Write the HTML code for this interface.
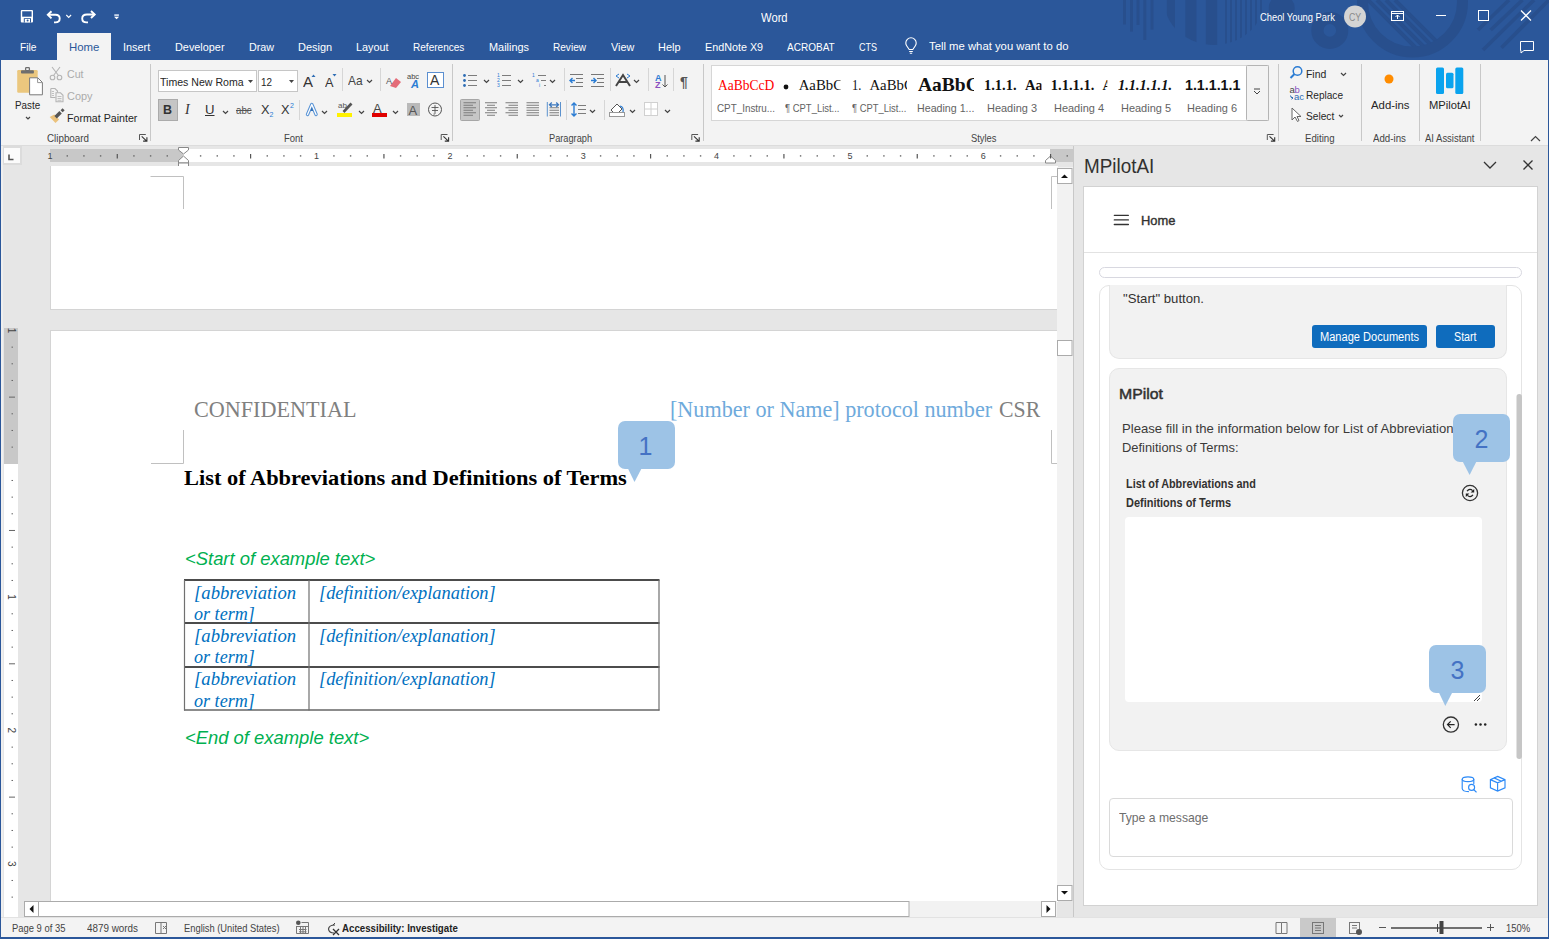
<!DOCTYPE html>
<html><head><meta charset="utf-8">
<style>
*{margin:0;padding:0;box-sizing:border-box}
:root{--s:"Liberation Sans",sans-serif;--f:"Liberation Serif",serif}
html,body{width:1549px;height:939px;overflow:hidden;background:#2B579A;font-family:"Liberation Sans",sans-serif;position:relative}
.a{position:absolute}
.t{position:absolute;white-space:nowrap;line-height:normal;transform-origin:0 0}
.sep{position:absolute;width:1px;background:#C8C8C8}
svg{position:absolute;overflow:visible}
</style></head><body>
<!-- ============ TITLE BAR ============ -->
<svg style="left:0;top:0" width="1549" height="60">
  <defs><clipPath id="semi"><ellipse cx="1214" cy="0" rx="50" ry="45"/></clipPath>
  <clipPath id="ring"><circle cx="1412.5" cy="2" r="45"/></clipPath></defs>
  <g fill="#284F8D">
    <rect x="1123" y="0" width="3" height="24.5"/>
    <rect x="1130" y="0" width="3" height="31.6"/>
    <rect x="1136.5" y="0" width="3" height="25"/>
    <rect x="1143.3" y="0" width="3" height="40"/>
    <rect x="1150.5" y="0" width="3" height="29.6"/>
    <g clip-path="url(#semi)">
      <rect x="1166.8" y="0" width="8.2" height="60"/>
      <rect x="1185.3" y="0" width="11.2" height="60"/>
      <rect x="1205.8" y="0" width="11.4" height="60"/>
      <rect x="1225" y="0" width="2" height="60"/>
      <rect x="1230" y="0" width="2" height="60"/>
      <rect x="1235" y="0" width="2" height="60"/>
      <rect x="1240" y="0" width="2" height="60"/>
      <rect x="1245" y="0" width="2" height="60"/>
      <rect x="1250" y="0" width="2" height="60"/>
      <rect x="1255" y="0" width="2" height="60"/>
      <rect x="1260" y="0" width="2" height="60"/>
    </g>
    <circle cx="1281.7" cy="8" r="13"/>
  </g>
  <circle cx="1329.8" cy="30.4" r="12.4" fill="none" stroke="#284F8D" stroke-width="12.2"/>
  <circle cx="1412.5" cy="2" r="50" fill="none" stroke="#284F8D" stroke-width="11"/>
  <g stroke="#284F8D" stroke-width="4" clip-path="url(#ring)">
    <line x1="1368" y1="0" x2="1428" y2="60"/>
    <line x1="1377" y1="0" x2="1437" y2="60"/>
    <line x1="1386" y1="0" x2="1446" y2="60"/>
    <line x1="1395" y1="0" x2="1455" y2="60"/>
  </g>
  <g stroke="#284F8D" stroke-width="3.6">
    <line x1="1478" y1="30" x2="1509" y2="0"/>
    <line x1="1490.7" y1="30" x2="1522.5" y2="0"/>
    <line x1="1483" y1="50" x2="1534" y2="0"/>
    <line x1="1501.5" y1="47.7" x2="1549" y2="0"/>
  </g>
</svg>
<!-- quick access -->
<svg style="left:0;top:0" width="130" height="33">
  <rect x="20.8" y="10" width="12.2" height="12.5" rx="1" fill="#fff"/>
  <rect x="22.2" y="11.3" width="9.4" height="5.4" fill="#2B579A"/>
  <rect x="23.8" y="18.2" width="7.2" height="4.3" fill="#2B579A"/>
  <rect x="24.8" y="19" width="5.2" height="3.5" fill="#fff"/>
  <circle cx="27.6" cy="20.5" r="1" fill="#2B579A"/>
  <path d="M48 14.8 H55.5 Q59.7 14.8 59.7 18.6 Q59.7 22.4 55.5 22.4 H54" fill="none" stroke="#fff" stroke-width="1.9"/>
  <path d="M51.5 11.2 L47.8 14.8 L51.5 18.4" fill="none" stroke="#fff" stroke-width="1.9"/>
  <path d="M66.3 15 L68.7 17.5 L71.1 15" fill="none" stroke="#fff" stroke-width="1.1"/>
  <path d="M94.5 14.5 H87 Q82.2 14.5 82.2 18.5 Q82.2 22.4 86.5 22.4 H88" fill="none" stroke="#fff" stroke-width="1.9"/>
  <path d="M91 11 L94.7 14.5 L91 18" fill="none" stroke="#fff" stroke-width="1.9"/>
  <rect x="114.3" y="14.2" width="4.6" height="2.2" fill="#C8D4E8"/>
  <path d="M114.3 17 H118.9 L116.6 19.2Z" fill="#fff"/>
</svg>
<!-- window controls -->
<svg style="left:0;top:0" width="1549" height="60">
  <circle cx="1355" cy="16.5" r="11" fill="#D4D4D4"/>
  <g fill="none" stroke="#fff" stroke-width="1">
    <rect x="1391.5" y="11.5" width="12" height="9"/>
    <line x1="1391.5" y1="13.5" x2="1403.5" y2="13.5"/>
    <line x1="1436" y1="15.5" x2="1446" y2="15.5"/>
    <rect x="1478.5" y="10.5" width="10" height="10"/>
    <line x1="1521" y1="10.5" x2="1531" y2="20.5" stroke-width="1.3"/>
    <line x1="1531" y1="10.5" x2="1521" y2="20.5" stroke-width="1.3"/>
    <path d="M1520.5 41.5 H1533.5 V50.5 H1524 L1521 53 V50.5 H1520.5Z"/>
  </g>
  <path d="M1397.5 19 V15 M1395.5 17 L1397.5 15 L1399.5 17" stroke="#fff" stroke-width="1" fill="none"/>
  <path d="M909.2 49.5 L906.8 46 Q905.8 44.5 905.8 43 A5.2 5.2 0 0 1 916.2 43 Q916.2 44.5 915.2 46 L912.8 49.5Z M909.2 51.5 H912.8 M909.8 53.3 H912.2" fill="none" stroke="#fff" stroke-width="1.1"/>
</svg>
<!-- Home tab -->
<div class="a" style="left:57px;top:33px;width:54px;height:28px;background:#F3F3F3"></div>

<!-- ============ RIBBON ============ -->
<div class="a" style="left:1px;top:60px;width:1547px;height:86px;background:#F3F3F3;border-bottom:1px solid #DCDCDC"></div>
<div class="sep" style="left:150px;top:64px;height:77px"></div>
<div class="sep" style="left:452px;top:64px;height:77px"></div>
<div class="sep" style="left:703px;top:64px;height:77px"></div>
<div class="sep" style="left:1278px;top:64px;height:77px"></div>
<div class="sep" style="left:1361px;top:64px;height:77px"></div>
<div class="sep" style="left:1419px;top:64px;height:77px"></div>
<div class="sep" style="left:1480px;top:64px;height:77px"></div>
<!-- clipboard icons -->
<svg style="left:0;top:60px" width="150" height="86">
  <rect x="17.2" y="10" width="20.5" height="22.7" rx="1.2" fill="#EBC77E"/>
  <rect x="21" y="10.2" width="12.9" height="3.3" rx="0.8" fill="#6E6E6E"/>
  <rect x="25.6" y="7.6" width="3.8" height="3" rx="0.8" fill="none" stroke="#6E6E6E" stroke-width="1.3"/>
  <path d="M29.6 17.8 H37.8 L42.4 22.4 V34.8 H29.6Z" fill="#fff" stroke="#7A7A7A" stroke-width="1"/>
  <path d="M37.6 18 V22.6 H42.2" fill="none" stroke="#8A8A8A" stroke-width="0.9"/>
  <path d="M26 57 L28 59 L30 57" fill="none" stroke="#444" stroke-width="1.2"/>
  <!-- cut -->
  <g fill="none" stroke="#B4B4B4" stroke-width="1.1">
    <circle cx="52.5" cy="17.5" r="2.3"/><circle cx="59.5" cy="17.5" r="2.3"/>
    <path d="M53.5 15.5 L60 7 M58.5 15.5 L52 7"/>
    <path d="M50.8 28.5 H55 L57.5 31 V32.5 M50.8 28.5 V37.5 H55.5"/>
    <path d="M56 32.8 H60.5 L63 35.3 V41.8 H56Z"/>
    <path d="M57.5 36.5 H61.5 M57.5 38.5 H61.5 M57.5 40.3 H61.5 M51.8 31.5 H54 M51.8 33.5 H54 M51.8 35.5 H54" stroke-width="0.8"/>
  </g>
  <!-- format painter -->
  <path d="M49.7 56.9 L54.3 54.6 L59.1 59.4 L55.5 62.9Z" fill="#EBC27C"/>
  <path d="M55.6 57.3 L60.6 52.3" stroke="#555" stroke-width="3.4"/>
  <path d="M61.6 51.3 L63.6 49.3" stroke="#555" stroke-width="3"/>
  
</svg>
<!-- font group -->
<div class="a" style="left:158px;top:70px;width:99px;height:22px;background:#fff;border:1px solid #C6C6C6"></div>
<div class="a" style="left:258px;top:70px;width:40px;height:22px;background:#fff;border:1px solid #C6C6C6"></div>
<div class="a" style="left:158px;top:99px;width:20px;height:22px;background:#C5C5C5;border:1px solid #ABABAB"></div>
<svg style="left:0;top:60px" width="460" height="86">
  <path d="M248 20 H253 L250.5 23Z" fill="#444"/>
  <path d="M289 20 H294 L291.5 23Z" fill="#444"/>
  <path d="M311.5 17 L313.5 14.5 L315.5 17Z" fill="#2E6DB4"/>
  <path d="M332.5 14 H336.5 L334.5 16.5Z" fill="#2E6DB4"/>
  <line x1="342.5" y1="8" x2="342.5" y2="31" stroke="#D6D6D6"/>
  <path d="M367 20 L369.5 22.5 L372 20" fill="none" stroke="#444" stroke-width="1.2"/>
  <line x1="380.5" y1="8" x2="380.5" y2="31" stroke="#D6D6D6"/>
  <!-- clear formatting -->
  <path d="M390 26 L396 18 L401 22 L396 28Z" fill="#E46C78"/>
  <text x="386" y="24" font-size="9" fill="#555" font-family="Liberation Sans">A</text>
  <!-- abc A -->
  <text x="407" y="19" font-size="7.5" fill="#444" font-family="Liberation Sans">abc</text>
  <text x="411" y="28" font-size="11" font-weight="bold" font-style="italic" fill="#2B7CD3" font-family="Liberation Sans">A</text>
  <rect x="427.5" y="12.5" width="16" height="15" fill="#fff" stroke="#5B8FD0"/>
  <text x="430" y="25" font-size="14" fill="#333" font-family="Liberation Sans">A</text>
  <!-- row 2 -->
  <path d="M223 51 L225.5 53.5 L228 51" fill="none" stroke="#444" stroke-width="1.2"/>
  <line x1="299.5" y1="40" x2="299.5" y2="60" stroke="#D6D6D6"/>
  <path d="M307.5 54.5 L311.8 44.5 L316.1 54.5" fill="none" stroke="#5B95D6" stroke-width="3.4" stroke-linejoin="round" stroke-linecap="round"/>
  <path d="M307.5 54.5 L311.8 44.5 L316.1 54.5" fill="none" stroke="#FFFFFF" stroke-width="1.3" stroke-linejoin="round" stroke-linecap="round"/>
  <path d="M310.3 51 L311.8 47.5 L313.3 51Z" fill="#2E6DB4"/>
  <path d="M322 51 L324.5 53.5 L327 51" fill="none" stroke="#444" stroke-width="1.2"/>
  <text x="338" y="48" font-size="8" fill="#555" font-family="Liberation Sans">ab</text>
  <path d="M343.5 52 L351.5 43.5" stroke="#555" stroke-width="2.6"/>
  <rect x="337" y="53" width="15" height="4" fill="#FFF100"/>
  <path d="M359 51 L361.5 53.5 L364 51" fill="none" stroke="#444" stroke-width="1.2"/>
  <text x="373" y="53" font-size="13" fill="#444" font-family="Liberation Sans">A</text>
  <rect x="372" y="53" width="15" height="4" fill="#E00000"/>
  <path d="M393 51 L395.5 53.5 L398 51" fill="none" stroke="#444" stroke-width="1.2"/>
  <rect x="407" y="43" width="13" height="13" fill="#B9B9B9"/>
  <text x="408.5" y="54.5" font-size="13" fill="#555" font-family="Liberation Sans">A</text>
  <circle cx="435" cy="49.5" r="6.5" fill="none" stroke="#555" stroke-width="1"/>
  <path d="M431.5 47.5 H438.5 M435 45 V53.5 Q435 54.5 433.5 54 M432 50.5 H438" stroke="#555" stroke-width="0.9" fill="none"/>
  
</svg>
<!-- paragraph group -->
<div class="a" style="left:460px;top:99px;width:20px;height:22px;background:#C6C6C6;border:1px solid #A6A6A6;border-radius:1.5px"></div>
<svg style="left:0;top:60px" width="710" height="86">
  <g fill="#2E6DB4">
    <circle cx="464.5" cy="15.5" r="1.4"/><circle cx="464.5" cy="20.5" r="1.4"/><circle cx="464.5" cy="25.5" r="1.4"/>
  </g>
  <g stroke="#7C7C7C" stroke-width="1">
    <path d="M468 15.5 H477 M468 20.5 H477 M468 25.5 H477"/>
    <path d="M502 15.5 H511 M502 20.5 H511 M502 25.5 H511"/>
    <path d="M538 15.5 H546 M541 20.5 H546 M544 25.5 H546"/>
  </g>
  <g font-family="Liberation Sans" font-size="5" fill="#2B7CD3">
    <text x="497" y="17">1</text><text x="497" y="22">2</text><text x="497" y="27">3</text>
    <text x="532" y="17">1</text><text x="536" y="22">a</text><text x="539" y="27">i</text>
  </g>
  <g fill="none" stroke="#444" stroke-width="1.2">
    <path d="M484 20 L486.5 22.5 L489 20"/>
    <path d="M518 20 L520.5 22.5 L523 20"/>
    <path d="M550 20 L552.5 22.5 L555 20"/>
    <path d="M634 20 L636.5 22.5 L639 20"/>
  </g>
  <line x1="564.5" y1="8" x2="564.5" y2="31" stroke="#D6D6D6"/>
  <line x1="610.5" y1="8" x2="610.5" y2="31" stroke="#D6D6D6"/>
  <line x1="648.5" y1="8" x2="648.5" y2="31" stroke="#D6D6D6"/>
  <line x1="673.5" y1="8" x2="673.5" y2="31" stroke="#D6D6D6"/>
  <!-- indents -->
  <g stroke="#777" stroke-width="1">
    <path d="M570 14.5 H583 M576 18.5 H583 M576 22.5 H583 M570 26.5 H583"/>
    <path d="M591 14.5 H604 M597 18.5 H604 M597 22.5 H604 M591 26.5 H604"/>
  </g>
  <path d="M575 20.5 H570 M572.5 18 L570 20.5 L572.5 23" stroke="#2B7CD3" stroke-width="1.4" fill="none"/>
  <path d="M591 20.5 H596 M593.5 18 L596 20.5 L593.5 23" stroke="#2B7CD3" stroke-width="1.4" fill="none"/>
  <!-- text direction -->
  <path d="M616 26 L623 15 L630 26 M619 22 H627" stroke="#444" stroke-width="2" fill="none"/>
  <path d="M616 16 L619 14 M616 16 L619 18 M630 16 L627 14 M630 16 L627 18" stroke="#2B7CD3" stroke-width="1" fill="none"/>
  <!-- sort -->
  <text x="655" y="21" font-size="9" font-weight="bold" fill="#2B7CD3" font-family="Liberation Sans">A</text>
  <text x="655" y="28" font-size="9" font-weight="bold" fill="#8A4FBF" font-family="Liberation Sans">Z</text>
  <path d="M665 15 V27 M662.5 24.5 L665 27 L667.5 24.5" stroke="#555" stroke-width="1" fill="none"/>
  <text x="680" y="27" font-size="14" font-weight="bold" fill="#555" font-family="Liberation Sans">¶</text>
  <!-- align -->
  <g stroke="#7C7C7C" stroke-width="1.1">
    <path d="M463.5 42.8 H476 M463.5 45.3 H473 M463.5 47.8 H476 M463.5 50.3 H473 M463.5 52.8 H476 M463.5 55.3 H473"/>
    <path d="M485 42.8 H497 M487 45.3 H495 M485 47.8 H497 M487 50.3 H495 M485 52.8 H497 M487 55.3 H495"/>
    <path d="M505.5 42.8 H518 M508.5 45.3 H518 M505.5 47.8 H518 M508.5 50.3 H518 M505.5 52.8 H518 M508.5 55.3 H518"/>
    <path d="M526.5 42.8 H539 M526.5 45.3 H539 M526.5 47.8 H539 M526.5 50.3 H539 M526.5 52.8 H539 M526.5 55.3 H539"/>
    <path d="M549.5 50.3 H559 M549.5 52.8 H559 M549.5 55.3 H559 M549.5 47.8 H559"/>
    <path d="M578 45.5 H586 M578 49.5 H586 M578 53.5 H586"/>
  </g>
  <path d="M547.3 42 V56.5 M560.5 42 V56.5" stroke="#4A86C8" stroke-width="0.9"/>
  <path d="M549.5 44.8 H558.5 M551.8 42.5 L549.5 44.8 L551.8 47 M556.2 42.5 L558.5 44.8 L556.2 47" stroke="#3C78BE" stroke-width="1.3" fill="none"/>
  <line x1="566.5" y1="40" x2="566.5" y2="60" stroke="#D6D6D6"/>
  <path d="M574 43 V56 M571.5 45.5 L574 43 L576.5 45.5 M571.5 53.5 L574 56 L576.5 53.5" stroke="#2B7CD3" stroke-width="1.4" fill="none"/>
  <path d="M590 50 L592.5 52.5 L595 50" fill="none" stroke="#444" stroke-width="1.2"/>
  <line x1="604.5" y1="40" x2="604.5" y2="60" stroke="#D6D6D6"/>
  <path d="M611 50 L617 44 L622 49 L616 55Z" fill="#fff" stroke="#555" stroke-width="1"/>
  <path d="M620 46 Q624 47 623 52" stroke="#2B7CD3" stroke-width="1.2" fill="none"/>
  <rect x="609.5" y="52.5" width="15" height="4" fill="#fff" stroke="#999"/>
  <path d="M630 50 L632.5 52.5 L635 50" fill="none" stroke="#444" stroke-width="1.2"/>
  <rect x="644.5" y="42.5" width="13" height="13" fill="#fff" stroke="#D0D0D0"/>
  <path d="M651 42.5 V55.5 M644.5 49 H657.5" stroke="#D0D0D0"/>
  <path d="M665 50 L667.5 52.5 L670 50" fill="none" stroke="#444" stroke-width="1.2"/>
  
</svg>
<!-- styles gallery -->
<div class="a" style="left:711px;top:65px;width:558px;height:56px;background:#fff;border:1px solid #D6D6D6"></div>
<div class="a" style="left:1246px;top:65px;width:23px;height:56px;background:#F3F3F3;border:1px solid #B4B4B4;border-radius:1.5px"></div>
<svg style="left:0;top:60px" width="1549" height="86">
  <circle cx="786" cy="27" r="2.4" fill="#111"/>
  <path d="M1254 29 H1260 M1254 31 L1257 34 L1260 31" stroke="#444" stroke-width="1" fill="none"/>
  
  <!-- find -->
  <circle cx="1297.5" cy="11" r="4.3" fill="none" stroke="#2B7CD3" stroke-width="1.5"/>
  <path d="M1294.5 14 L1290.5 18" stroke="#2B7CD3" stroke-width="2"/>
  <path d="M1341 13 L1343.5 15.5 L1346 13" fill="none" stroke="#444" stroke-width="1.2"/>
  <path d="M1339 55 L1341 57 L1343 55" fill="none" stroke="#444" stroke-width="1.2"/>
  <text x="1289.5" y="33.2" font-size="9.5" fill="#444" font-family="Liberation Sans">a</text>
  <text x="1294.6" y="33.2" font-size="9.5" fill="#8A4FBF" font-family="Liberation Sans">b</text>
  <text x="1294" y="40.2" font-size="9.5" fill="#2E6DB4" font-family="Liberation Sans">ac</text>
  <path d="M1290.5 35.5 Q1290.5 38 1293 38 M1291.5 37 L1293 38 L1291.5 39.2" stroke="#2E6DB4" stroke-width="1" fill="none"/>
  <path d="M1292 48 V60 L1295 57 L1297.5 61.5 L1299 60.5 L1297 56.5 H1301Z" fill="#fff" stroke="#666" stroke-width="1"/>
  <circle cx="1389" cy="19" r="4.5" fill="#FF8C00"/>
  <rect x="1436" y="7.5" width="8" height="26.5" rx="1.5" fill="#0AA3EE"/>
  <rect x="1446" y="12.7" width="7.5" height="15.6" rx="1.5" fill="#0AA3EE"/>
  <rect x="1455.3" y="7.5" width="8" height="26.5" rx="1.5" fill="#0AA3EE"/>
  <path d="M1531 81 L1535.5 76.5 L1540 81" fill="none" stroke="#444" stroke-width="1.2"/>
</svg>

<svg style="left:0;top:0" width="1549" height="146"><path d="M139.5 140.0 V134.5 H145.8" fill="none" stroke="#555" stroke-width="1"/><path d="M141.7 136.3 L146.7 141.1 M143.1 141.1 H146.9 V137.3" fill="none" stroke="#333" stroke-width="1.1"/><path d="M441.2 140.0 V134.5 H447.5" fill="none" stroke="#555" stroke-width="1"/><path d="M443.4 136.3 L448.4 141.1 M444.8 141.1 H448.59999999999997 V137.3" fill="none" stroke="#333" stroke-width="1.1"/><path d="M691.8 140.0 V134.5 H698.0999999999999" fill="none" stroke="#555" stroke-width="1"/><path d="M694.0 136.3 L699.0 141.1 M695.4 141.1 H699.1999999999999 V137.3" fill="none" stroke="#333" stroke-width="1.1"/><path d="M1267.3 140.0 V134.5 H1273.6" fill="none" stroke="#555" stroke-width="1"/><path d="M1269.5 136.3 L1274.5 141.1 M1270.8999999999999 141.1 H1274.7 V137.3" fill="none" stroke="#333" stroke-width="1.1"/></svg>
<!-- ============ RULER ============ -->
<div class="a" style="left:1px;top:146px;width:1072px;height:21px;background:#E6E6E6"></div>
<div class="a" style="left:2px;top:146px;width:20px;height:19px;background:#FBFBFB;border:2px solid #DCDCDC"></div>
<svg style="left:0;top:146px" width="1080" height="22">
  <path d="M9 8.5 V13.5 H13.5" stroke="#555" stroke-width="1.6" fill="none"/>
  <rect x="50" y="3" width="133.3" height="13" fill="#C8C8C8"/>
  <rect x="183.3" y="3" width="866.7" height="13" fill="#fff"/>
  <rect x="1050" y="3" width="23" height="13" fill="#C8C8C8"/>
  <g id="ticks" fill="#555"></g>
  <path d="M178.5 1.5 H188.5 V4 L183.5 8 L178.5 4Z" fill="#fff" stroke="#888"/>
  <path d="M183.5 10 L188.5 14.5 V17 H178.5 V14.5Z" fill="#fff" stroke="#888"/>
  <rect x="178.5" y="17" width="10" height="4" fill="#fff" stroke="#888"/>
  <path d="M1050.5 10 L1055.5 14.5 V17 H1045.5 V14.5Z" fill="#fff" stroke="#888"/>
  <rect x="66.57" y="9.2" width="1.4" height="1.4" fill="#666"/>
<rect x="83.23" y="9.2" width="1.4" height="1.4" fill="#666"/>
<rect x="99.90" y="9.2" width="1.4" height="1.4" fill="#666"/>
<rect x="116.67" y="8" width="1.2" height="4.5" fill="#555"/>
<rect x="133.23" y="9.2" width="1.4" height="1.4" fill="#666"/>
<rect x="149.90" y="9.2" width="1.4" height="1.4" fill="#666"/>
<rect x="166.56" y="9.2" width="1.4" height="1.4" fill="#666"/>
<rect x="199.90" y="9.2" width="1.4" height="1.4" fill="#666"/>
<rect x="216.56" y="9.2" width="1.4" height="1.4" fill="#666"/>
<rect x="233.23" y="9.2" width="1.4" height="1.4" fill="#666"/>
<rect x="250.00" y="8" width="1.2" height="4.5" fill="#555"/>
<rect x="266.56" y="9.2" width="1.4" height="1.4" fill="#666"/>
<rect x="283.23" y="9.2" width="1.4" height="1.4" fill="#666"/>
<rect x="299.89" y="9.2" width="1.4" height="1.4" fill="#666"/>
<rect x="333.23" y="9.2" width="1.4" height="1.4" fill="#666"/>
<rect x="349.89" y="9.2" width="1.4" height="1.4" fill="#666"/>
<rect x="366.56" y="9.2" width="1.4" height="1.4" fill="#666"/>
<rect x="383.33" y="8" width="1.2" height="4.5" fill="#555"/>
<rect x="399.89" y="9.2" width="1.4" height="1.4" fill="#666"/>
<rect x="416.56" y="9.2" width="1.4" height="1.4" fill="#666"/>
<rect x="433.22" y="9.2" width="1.4" height="1.4" fill="#666"/>
<rect x="466.56" y="9.2" width="1.4" height="1.4" fill="#666"/>
<rect x="483.22" y="9.2" width="1.4" height="1.4" fill="#666"/>
<rect x="499.89" y="9.2" width="1.4" height="1.4" fill="#666"/>
<rect x="516.66" y="8" width="1.2" height="4.5" fill="#555"/>
<rect x="533.22" y="9.2" width="1.4" height="1.4" fill="#666"/>
<rect x="549.89" y="9.2" width="1.4" height="1.4" fill="#666"/>
<rect x="566.55" y="9.2" width="1.4" height="1.4" fill="#666"/>
<rect x="599.89" y="9.2" width="1.4" height="1.4" fill="#666"/>
<rect x="616.55" y="9.2" width="1.4" height="1.4" fill="#666"/>
<rect x="633.22" y="9.2" width="1.4" height="1.4" fill="#666"/>
<rect x="649.99" y="8" width="1.2" height="4.5" fill="#555"/>
<rect x="666.55" y="9.2" width="1.4" height="1.4" fill="#666"/>
<rect x="683.22" y="9.2" width="1.4" height="1.4" fill="#666"/>
<rect x="699.88" y="9.2" width="1.4" height="1.4" fill="#666"/>
<rect x="733.22" y="9.2" width="1.4" height="1.4" fill="#666"/>
<rect x="749.88" y="9.2" width="1.4" height="1.4" fill="#666"/>
<rect x="766.55" y="9.2" width="1.4" height="1.4" fill="#666"/>
<rect x="783.32" y="8" width="1.2" height="4.5" fill="#555"/>
<rect x="799.88" y="9.2" width="1.4" height="1.4" fill="#666"/>
<rect x="816.55" y="9.2" width="1.4" height="1.4" fill="#666"/>
<rect x="833.21" y="9.2" width="1.4" height="1.4" fill="#666"/>
<rect x="866.55" y="9.2" width="1.4" height="1.4" fill="#666"/>
<rect x="883.21" y="9.2" width="1.4" height="1.4" fill="#666"/>
<rect x="899.88" y="9.2" width="1.4" height="1.4" fill="#666"/>
<rect x="916.65" y="8" width="1.2" height="4.5" fill="#555"/>
<rect x="933.21" y="9.2" width="1.4" height="1.4" fill="#666"/>
<rect x="949.88" y="9.2" width="1.4" height="1.4" fill="#666"/>
<rect x="966.54" y="9.2" width="1.4" height="1.4" fill="#666"/>
<rect x="999.88" y="9.2" width="1.4" height="1.4" fill="#666"/>
<rect x="1016.54" y="9.2" width="1.4" height="1.4" fill="#666"/>
<rect x="1033.21" y="9.2" width="1.4" height="1.4" fill="#666"/>
<rect x="1049.98" y="8" width="1.2" height="4.5" fill="#555"/>
<rect x="1066.54" y="9.2" width="1.4" height="1.4" fill="#666"/>
</svg>

<!-- ============ DOC AREA ============ -->
<div class="a" style="left:1px;top:167px;width:1072px;height:750px;background:#E6E6E6"></div>
<!-- vertical ruler -->
<div class="a" style="left:1px;top:146px;width:2px;height:771px;background:#EFEFEF"></div>
<div class="a" style="left:4px;top:328px;width:14px;height:589px;background:#fff"></div>
<div class="a" style="left:4px;top:328px;width:14px;height:136px;background:#C8C8C8"></div>
<svg style="left:0;top:0" width="30" height="939">
<rect x="11.5" y="346.64" width="1.5" height="1" fill="#666"/>
<rect x="11.5" y="363.30" width="1.5" height="1" fill="#666"/>
<rect x="11.5" y="379.97" width="1.5" height="1" fill="#666"/>
<rect x="9" y="396.63" width="6" height="1" fill="#666"/>
<rect x="11.5" y="413.30" width="1.5" height="1" fill="#666"/>
<rect x="11.5" y="429.97" width="1.5" height="1" fill="#666"/>
<rect x="11.5" y="446.63" width="1.5" height="1" fill="#666"/>
<rect x="11.5" y="479.97" width="1.5" height="1" fill="#666"/>
<rect x="11.5" y="496.63" width="1.5" height="1" fill="#666"/>
<rect x="11.5" y="513.30" width="1.5" height="1" fill="#666"/>
<rect x="9" y="529.97" width="6" height="1" fill="#666"/>
<rect x="11.5" y="546.63" width="1.5" height="1" fill="#666"/>
<rect x="11.5" y="563.30" width="1.5" height="1" fill="#666"/>
<rect x="11.5" y="579.96" width="1.5" height="1" fill="#666"/>
<rect x="11.5" y="613.30" width="1.5" height="1" fill="#666"/>
<rect x="11.5" y="629.96" width="1.5" height="1" fill="#666"/>
<rect x="11.5" y="646.63" width="1.5" height="1" fill="#666"/>
<rect x="9" y="663.30" width="6" height="1" fill="#666"/>
<rect x="11.5" y="679.96" width="1.5" height="1" fill="#666"/>
<rect x="11.5" y="696.63" width="1.5" height="1" fill="#666"/>
<rect x="11.5" y="713.29" width="1.5" height="1" fill="#666"/>
<rect x="11.5" y="746.63" width="1.5" height="1" fill="#666"/>
<rect x="11.5" y="763.29" width="1.5" height="1" fill="#666"/>
<rect x="11.5" y="779.96" width="1.5" height="1" fill="#666"/>
<rect x="9" y="796.62" width="6" height="1" fill="#666"/>
<rect x="11.5" y="813.29" width="1.5" height="1" fill="#666"/>
<rect x="11.5" y="829.96" width="1.5" height="1" fill="#666"/>
<rect x="11.5" y="846.62" width="1.5" height="1" fill="#666"/>
<rect x="11.5" y="879.96" width="1.5" height="1" fill="#666"/>
<rect x="11.5" y="896.62" width="1.5" height="1" fill="#666"/>
<text x="0" y="0" transform="translate(8 330.5) rotate(90)" font-size="10" text-anchor="middle" fill="#444" font-family="Liberation Sans">1</text>
<text x="0" y="0" transform="translate(8 597.1) rotate(90)" font-size="10" text-anchor="middle" fill="#444" font-family="Liberation Sans">1</text>
<text x="0" y="0" transform="translate(8 730.4) rotate(90)" font-size="10" text-anchor="middle" fill="#444" font-family="Liberation Sans">2</text>
<text x="0" y="0" transform="translate(8 863.8) rotate(90)" font-size="10" text-anchor="middle" fill="#444" font-family="Liberation Sans">3</text>
</svg>
<!-- page 1 -->
<div class="a" style="left:50px;top:166px;width:1008px;height:144px;background:#fff;border-left:1px solid #D4D4D4;border-bottom:1px solid #D4D4D4"></div>
<!-- page 2 -->
<div class="a" style="left:50px;top:330px;width:1008px;height:572px;background:#fff;border-left:1px solid #D4D4D4;border-top:1px solid #D4D4D4"></div>
<svg style="left:0;top:0" width="1080" height="939">
  <g stroke="#C0C0C0" stroke-width="1" fill="none">
    <path d="M150.5 176.5 H183.5 V209"/>
    <path d="M1057 176.5 H1051.5 V209"/>
    <path d="M183.5 430 V463.5 H151"/>
    <path d="M1051.5 430 V463.5 H1057"/>
  </g>
  <!-- table -->
  <g fill="none">
    <path d="M184 580 H659.5" stroke="#111" stroke-width="1.5"/>
    <path d="M184 623 H659.5" stroke="#111" stroke-width="1.5"/>
    <path d="M184 667 H659.5" stroke="#111" stroke-width="1.5"/>
    <path d="M184 710 H659.5" stroke="#666" stroke-width="1.5"/>
    <path d="M184.5 580 V710.5 M309 580 V710.5 M659 580 V710.5" stroke="#707070" stroke-width="1.2"/>
  </g>
</svg>
<!-- vertical scrollbar -->
<div class="a" style="left:1057px;top:167px;width:16px;height:734px;background:#F2F2F2"></div>
<div class="a" style="left:1073px;top:146px;width:1px;height:771px;background:#C8C8C8"></div>
<svg style="left:0;top:0" width="1080" height="939">
  <rect x="1057.5" y="168.5" width="14.5" height="15" fill="#fff" stroke="#ABABAB"/>
  <path d="M1061 178 H1068 L1064.5 174.5Z" fill="#111"/>
  <rect x="1057.5" y="340.5" width="14.5" height="15" fill="#fff" stroke="#ABABAB"/>
  <rect x="1057.5" y="885.5" width="14.5" height="15" fill="#fff" stroke="#ABABAB"/>
  <path d="M1061 891 H1068 L1064.5 894.5Z" fill="#111"/>
</svg>
<!-- horizontal scrollbar -->
<div class="a" style="left:24px;top:901px;width:1033px;height:16px;background:#F2F2F2"></div>
<svg style="left:0;top:0" width="1080" height="939">
  <rect x="24.5" y="901.5" width="14" height="15" fill="#fff" stroke="#ABABAB"/>
  <path d="M33.5 905 V913 L29.5 909Z" fill="#111"/>
  <rect x="38.5" y="901.5" width="870.5" height="15" fill="#fff" stroke="#ABABAB"/>
  <rect x="1041.5" y="901.5" width="14" height="15" fill="#fff" stroke="#ABABAB"/>
  <path d="M1046.5 905 V913 L1050.5 909Z" fill="#111"/>
</svg>

<!-- ============ TASK PANE ============ -->
<div class="a" style="left:1074px;top:146px;width:474px;height:771px;background:#E6E6E6"></div>
<svg style="left:0;top:0" width="1549" height="939">
  <path d="M1484 162 L1490 168 L1496 162" fill="none" stroke="#333" stroke-width="1.3"/>
  <path d="M1523.5 160.5 L1532.5 169.5 M1532.5 160.5 L1523.5 169.5" fill="none" stroke="#333" stroke-width="1.3"/>
</svg>
<div class="a" style="left:1083px;top:186px;width:455px;height:720px;background:#fff;border:1px solid #D2D2D2"></div>
<div class="a" style="left:1084px;top:252px;width:453px;height:1px;background:#E2E2E2"></div>
<svg style="left:0;top:0" width="1549" height="939">
  <path d="M1114.3 215.3 H1128.4 M1114.3 219.9 H1128.4 M1114.3 224.5 H1128.4" stroke="#333" stroke-width="1.3" stroke-linecap="round"/>
</svg>
<div class="a" style="left:1099px;top:267px;width:423px;height:11px;border:1px solid #D8D8E0;border-radius:6px;background:#fff"></div>
<div class="a" style="left:1099px;top:285px;width:423px;height:585px;border:1px solid #E4E4E4;border-radius:10px;background:#fff"></div>
<!-- card1 clipped -->
<div class="a" style="left:1109px;top:285px;width:398px;height:74px;background:#F2F2F2;border:1px solid #E6E6E6;border-top:none;border-radius:0 0 10px 10px"></div>
<div class="a" style="left:1312px;top:325px;width:115px;height:23px;background:#0F6CBD;border-radius:3px"></div>
<div class="a" style="left:1436px;top:325px;width:59px;height:23px;background:#0F6CBD;border-radius:3px"></div>
<!-- card 2 -->
<div class="a" style="left:1109px;top:368px;width:398px;height:383px;background:#F2F2F2;border:1px solid #E6E6E6;border-radius:10px"></div>
<div class="a" style="left:1125px;top:517px;width:357px;height:185px;background:#fff;border-radius:4px"></div>
<svg style="left:0;top:0" width="1549" height="939">
  <!-- refresh -->
  <circle cx="1470" cy="493" r="7.6" fill="none" stroke="#333" stroke-width="1.3"/>
  <path d="M1467 491.2 Q1469.8 488 1472.6 490.6 M1473 494.8 Q1470.2 498 1467.4 495.4" fill="none" stroke="#222" stroke-width="1.2"/>
  <path d="M1474.2 489 V492.6 H1470.6Z M1465.8 497 V493.4 H1469.4Z" fill="#222"/>
  <!-- resize grip -->
  <path d="M1474 701 L1480 695 M1477 701 L1480 698" stroke="#444" stroke-width="1"/>
  <!-- back -->
  <circle cx="1450.9" cy="724.6" r="7.6" fill="none" stroke="#333" stroke-width="1.3"/>
  <path d="M1454.6 724.6 H1447.8 M1450.7 721.3 L1447.5 724.6 L1450.7 727.9" fill="none" stroke="#222" stroke-width="1.2"/>
  <circle cx="1475.9" cy="724.6" r="1.25" fill="#222"/><circle cx="1480.5" cy="724.6" r="1.25" fill="#222"/><circle cx="1485.2" cy="724.6" r="1.25" fill="#222"/>
  <!-- pane scrollbar thumb -->
  <rect x="1516.5" y="394" width="5.5" height="365" rx="2.7" fill="#C6C6C6"/>
  <!-- db search -->
  <g fill="none" stroke="#2D8AF7" stroke-width="1.15" stroke-linecap="round">
    <ellipse cx="1468" cy="779.3" rx="5.8" ry="2.4"/>
    <path d="M1462.2 779.3 V788.5 Q1462.5 791.5 1468.5 791.6 M1473.8 779.3 V783.5"/>
    <circle cx="1471.6" cy="787.4" r="3"/>
    <path d="M1473.7 789.6 L1476.2 792"/>
    <!-- cube -->
    <path d="M1497.6 776.4 L1505 779.6 V787.8 L1497.6 791 L1490.4 787.8 V779.6Z M1490.4 779.6 L1497.6 782.8 L1505 779.6 M1497.6 782.8 V791 M1494 777.9 L1501.4 781.2"/>
  </g>
</svg>
<div class="a" style="left:1109px;top:798px;width:404px;height:59px;background:#fff;border:1px solid #DADADA;border-radius:4px"></div>

<!-- ============ STATUS BAR ============ -->
<div class="a" style="left:1px;top:917px;width:1547px;height:20px;background:#F3F3F3;border-top:1px solid #E2E2E2"></div>
<div class="a" style="left:1300px;top:918px;width:36px;height:19px;background:#C9C9C9"></div>
<svg style="left:0;top:0" width="1549" height="939">
  <g fill="none" stroke="#777" stroke-width="1">
    <path d="M155.5 922.5 H161 V933.5 H155.5Z M161 922.5 H166.5 V933.5 H161"/>
    <path d="M163 926 L166 929 M166 926 L163 929"/>
    <path d="M301.5 922.5 H308.5 V933.5 H296.5 V926"/>
    <path d="M296.5 926.5 H308.5 M299 929.5 H306.5 M299 931.8 H306.5 M300.5 927 V933 M303 927 V933 M305.5 927 V933"/>
    <path d="M1276 922.5 H1281.5 V933.5 H1276Z M1281.5 922.5 H1287 V933.5 H1281.5"/>
    <rect x="1312.5" y="922.5" width="11" height="11"/>
    <path d="M1315 925.5 H1321 M1315 928 H1321 M1315 930.5 H1321"/>
    <rect x="1349.5" y="922.5" width="10" height="11"/>
    <path d="M1352 925.5 H1357 M1352 928 H1357"/>
  </g>
  <circle cx="1359" cy="932" r="3" fill="#555"/>
  <circle cx="298.3" cy="922.8" r="2.3" fill="#555"/>
  <path d="M1379 927.5 H1386 M1487 927.5 H1494 M1490.5 924 V931" stroke="#555" stroke-width="1"/>
  <path d="M1391 928 H1482" stroke="#444" stroke-width="1.6"/>
  <rect x="1439.5" y="921" width="4" height="13" fill="#444"/>
  <path d="M1437.5 924 V932" stroke="#444"/>
  <path d="M335 925 Q329 925 328.5 929 Q329 933 334 933" fill="none" stroke="#444" stroke-width="1.2"/>
  <path d="M333 929 L339 935 M339 929 L333 935" stroke="#333" stroke-width="1.3"/>
  <path d="M333 925 L335 923" stroke="#444"/>
</svg>
<!-- window border -->
<div class="a" style="left:0;top:60px;width:1px;height:879px;background:#2B579A"></div>
<div class="a" style="left:1548px;top:60px;width:1px;height:879px;background:#2B579A"></div>
<div class="a" style="left:0;top:937px;width:1549px;height:2px;background:#2B579A"></div>

<div class="t" id="t0" style="left:760.7px;top:11.04px;font-size:12px;color:#FFFFFF;font-family:var(--s);transform:scaleX(0.9349);">Word</div>
<div class="t" id="t1" style="left:1260px;top:10.79px;font-size:11.5px;color:#FFFFFF;font-family:var(--s);transform:scaleX(0.8124);">Cheol Young Park</div>
<div class="t" id="t2" style="left:1348.7px;top:11.95px;font-size:10px;color:#8A8A8A;font-family:var(--s);transform:scaleX(0.8773);">CY</div>
<div class="t" id="t3" style="left:20.1px;top:40.57px;font-size:11.3px;color:#FFFFFF;font-family:var(--s);transform:scaleX(0.9064);">File</div>
<div class="t" id="t4" style="left:68.8px;top:40.57px;font-size:11.3px;color:#2B579A;font-family:var(--s);transform:scaleX(1.0086);">Home</div>
<div class="t" id="t5" style="left:123px;top:40.57px;font-size:11.3px;color:#FFFFFF;font-family:var(--s);transform:scaleX(0.9658);">Insert</div>
<div class="t" id="t6" style="left:174.5px;top:40.57px;font-size:11.3px;color:#FFFFFF;font-family:var(--s);transform:scaleX(0.9612);">Developer</div>
<div class="t" id="t7" style="left:248.5px;top:40.57px;font-size:11.3px;color:#FFFFFF;font-family:var(--s);transform:scaleX(0.9517);">Draw</div>
<div class="t" id="t8" style="left:297.5px;top:40.57px;font-size:11.3px;color:#FFFFFF;font-family:var(--s);transform:scaleX(0.9695);">Design</div>
<div class="t" id="t9" style="left:355.7px;top:40.57px;font-size:11.3px;color:#FFFFFF;font-family:var(--s);transform:scaleX(0.9610);">Layout</div>
<div class="t" id="t10" style="left:412.5px;top:40.57px;font-size:11.3px;color:#FFFFFF;font-family:var(--s);transform:scaleX(0.8896);">References</div>
<div class="t" id="t11" style="left:488.6px;top:40.57px;font-size:11.3px;color:#FFFFFF;font-family:var(--s);transform:scaleX(0.9653);">Mailings</div>
<div class="t" id="t12" style="left:553.4px;top:40.57px;font-size:11.3px;color:#FFFFFF;font-family:var(--s);transform:scaleX(0.8908);">Review</div>
<div class="t" id="t13" style="left:610.5px;top:40.57px;font-size:11.3px;color:#FFFFFF;font-family:var(--s);transform:scaleX(0.9549);">View</div>
<div class="t" id="t14" style="left:657.7px;top:40.57px;font-size:11.3px;color:#FFFFFF;font-family:var(--s);transform:scaleX(0.9684);">Help</div>
<div class="t" id="t15" style="left:704.7px;top:40.57px;font-size:11.3px;color:#FFFFFF;font-family:var(--s);transform:scaleX(0.9537);">EndNote X9</div>
<div class="t" id="t16" style="left:787.3px;top:40.57px;font-size:11.3px;color:#FFFFFF;font-family:var(--s);transform:scaleX(0.8869);">ACROBAT</div>
<div class="t" id="t17" style="left:859.3px;top:40.57px;font-size:11.3px;color:#FFFFFF;font-family:var(--s);transform:scaleX(0.8006);">CTS</div>
<div class="t" id="t18" style="left:928.5px;top:39.97px;font-size:11.3px;color:#FFFFFF;font-family:var(--s);transform:scaleX(1.0007);">Tell me what you want to do</div>
<div class="t" id="t19" style="left:15.2px;top:98.79px;font-size:11.5px;color:#262626;font-family:var(--s);transform:scaleX(0.8531);">Paste</div>
<div class="t" id="t20" style="left:66.8px;top:68.39px;font-size:11.5px;color:#ABABAB;font-family:var(--s);transform:scaleX(0.9215);">Cut</div>
<div class="t" id="t21" style="left:66.8px;top:89.79px;font-size:11.5px;color:#ABABAB;font-family:var(--s);transform:scaleX(0.9494);">Copy</div>
<div class="t" id="t22" style="left:67.1px;top:111.79px;font-size:11.5px;color:#262626;font-family:var(--s);transform:scaleX(0.9256);">Format Painter</div>
<div class="t" id="t23" style="left:47.1px;top:131.80px;font-size:10.5px;color:#444444;font-family:var(--s);transform:scaleX(0.9343);">Clipboard</div>
<div class="t" id="t24" style="left:160.4px;top:75.59px;font-size:11.5px;color:#262626;font-family:var(--s);transform:scaleX(0.9192);">Times New Roma</div>
<div class="t" id="t25" style="left:260.6px;top:75.59px;font-size:11.5px;color:#262626;font-family:var(--s);transform:scaleX(0.8596);">12</div>
<div class="t" id="t26" style="left:303px;top:73.02px;font-size:15px;color:#333;font-family:var(--s);transform:scaleX(0.9984);">A</div>
<div class="t" id="t27" style="left:324.5px;top:75.74px;font-size:12px;color:#333;font-family:var(--s);transform:scaleX(1.0604);">A</div>
<div class="t" id="t28" style="left:348.4px;top:73.23px;font-size:13px;color:#444;font-family:var(--s);transform:scaleX(0.9179);">Aa</div>
<div class="t" id="t29" style="left:163px;top:102.03px;font-size:13px;color:#333;font-family:var(--s);font-weight:bold;transform:scaleX(0.9584);">B</div>
<div class="t" id="t30" style="left:185px;top:101.93px;font-size:14px;color:#333;font-family:var(--f);font-style:italic;">I</div>
<div class="t" id="t31" style="left:204.5px;top:102.44px;font-size:13px;color:#333;font-family:var(--s);text-decoration:underline;transform:scaleX(1.0116);">U</div>
<div class="t" id="t32" style="left:236.4px;top:104.45px;font-size:11px;color:#555;font-family:var(--s);text-decoration:line-through;transform:scaleX(0.8789);">abc</div>
<div class="t" id="t33" style="left:260.6px;top:103.29px;font-size:12.5px;color:#333;font-family:var(--s);transform:scaleX(1.0187);">X</div>
<div class="t" id="t34" style="left:269.5px;top:110.67px;font-size:7px;color:#2B7CD3;font-family:var(--s);">2</div>
<div class="t" id="t35" style="left:281.4px;top:103.29px;font-size:12.5px;color:#333;font-family:var(--s);transform:scaleX(1.0187);">X</div>
<div class="t" id="t36" style="left:290px;top:102.17px;font-size:7px;color:#2B7CD3;font-family:var(--s);">2</div>
<div class="t" id="t37" style="left:284px;top:131.70px;font-size:10.5px;color:#444444;font-family:var(--s);transform:scaleX(0.9041);">Font</div>
<div class="t" id="t38" style="left:548.7px;top:131.90px;font-size:10.5px;color:#444444;font-family:var(--s);transform:scaleX(0.8788);">Paragraph</div>
<div class="t" id="t39" style="left:717.8px;top:76.81px;font-size:14.8px;color:#FF0000;font-family:var(--f);transform:scaleX(0.9115);">AaBbCcD</div>
<div class="t" id="t40" style="left:798.7px;top:76.81px;font-size:14.8px;color:#111;font-family:var(--f);">AaBbC</div>
<div class="t" id="t41" style="left:851.7px;top:76.81px;font-size:14.8px;color:#111;font-family:var(--f);transform:scaleX(0.8371);">1.</div>
<div class="t" id="t42" style="left:869.4px;top:76.81px;font-size:14.8px;color:#111;font-family:var(--f);">AaBbC</div>
<div class="t" id="t43" style="left:918px;top:74.23px;font-size:19.5px;color:#111;font-family:var(--f);font-weight:bold;">AaBbC</div>
<div class="t" id="t44" style="left:984.3px;top:77.08px;font-size:14.5px;color:#111;font-family:var(--f);font-weight:bold;transform:scaleX(0.9962);">1.1.1.</div>
<div class="t" id="t45" style="left:1025px;top:77.08px;font-size:14.5px;color:#111;font-family:var(--f);font-weight:bold;">Aa</div>
<div class="t" id="t46" style="left:1050.8px;top:77.08px;font-size:14.5px;color:#111;font-family:var(--f);font-weight:bold;transform:scaleX(1.0000);">1.1.1.1.</div>
<div class="t" id="t47" style="left:1102.5px;top:77.08px;font-size:14.5px;color:#111;font-family:var(--f);font-weight:bold;">A</div>
<div class="t" id="t48" style="left:1118px;top:77.08px;font-size:14.5px;color:#111;font-family:var(--f);font-weight:bold;font-style:italic;transform:scaleX(0.9931);">1.1.1.1.1.</div>
<div class="t" id="t49" style="left:1184.6px;top:76.88px;font-size:14.5px;color:#111;font-family:var(--s);font-weight:bold;transform:scaleX(0.9816);">1.1.1.1.1</div>
<div class="t" id="t50" style="left:716.5px;top:101.84px;font-size:11px;color:#636363;font-family:var(--s);transform:scaleX(0.8951);">CPT_Instru...</div>
<div class="t" id="t51" style="left:785px;top:101.84px;font-size:11px;color:#636363;font-family:var(--s);transform:scaleX(0.8600);">¶ CPT_List...</div>
<div class="t" id="t52" style="left:851.7px;top:101.84px;font-size:11px;color:#636363;font-family:var(--s);transform:scaleX(0.8568);">¶ CPT_List...</div>
<div class="t" id="t53" style="left:916.8px;top:101.84px;font-size:11px;color:#636363;font-family:var(--s);transform:scaleX(0.9692);">Heading 1...</div>
<div class="t" id="t54" style="left:987.4px;top:101.84px;font-size:11px;color:#636363;font-family:var(--s);transform:scaleX(0.9969);">Heading 3</div>
<div class="t" id="t55" style="left:1054px;top:101.84px;font-size:11px;color:#636363;font-family:var(--s);transform:scaleX(0.9969);">Heading 4</div>
<div class="t" id="t56" style="left:1120.6px;top:101.84px;font-size:11px;color:#636363;font-family:var(--s);transform:scaleX(0.9969);">Heading 5</div>
<div class="t" id="t57" style="left:1187.4px;top:101.84px;font-size:11px;color:#636363;font-family:var(--s);transform:scaleX(0.9969);">Heading 6</div>
<div class="t" id="t58" style="left:970.5px;top:131.90px;font-size:10.5px;color:#444444;font-family:var(--s);transform:scaleX(0.8918);">Styles</div>
<div class="t" id="t59" style="left:1306px;top:68.19px;font-size:11.5px;color:#262626;font-family:var(--s);transform:scaleX(0.9073);">Find</div>
<div class="t" id="t60" style="left:1306px;top:88.59px;font-size:11.5px;color:#262626;font-family:var(--s);transform:scaleX(0.8767);">Replace</div>
<div class="t" id="t61" style="left:1306px;top:110.29px;font-size:11.5px;color:#262626;font-family:var(--s);transform:scaleX(0.8852);">Select</div>
<div class="t" id="t62" style="left:1304.7px;top:131.90px;font-size:10.5px;color:#444444;font-family:var(--s);transform:scaleX(0.9218);">Editing</div>
<div class="t" id="t63" style="left:1370.5px;top:99.09px;font-size:11.5px;color:#262626;font-family:var(--s);transform:scaleX(0.9872);">Add-ins</div>
<div class="t" id="t64" style="left:1373px;top:131.90px;font-size:10.5px;color:#444444;font-family:var(--s);transform:scaleX(0.9239);">Add-ins</div>
<div class="t" id="t65" style="left:1428.9px;top:99.09px;font-size:11.5px;color:#262626;font-family:var(--s);transform:scaleX(0.9713);">MPilotAI</div>
<div class="t" id="t66" style="left:1425px;top:131.90px;font-size:10.5px;color:#444444;font-family:var(--s);transform:scaleX(0.9023);">AI Assistant</div>
<div class="t" id="t67" style="left:47.5px;top:150.95px;font-size:9px;color:#444;font-family:var(--s);">1</div>
<div class="t" id="t68" style="left:314.1px;top:150.95px;font-size:9px;color:#444;font-family:var(--s);">1</div>
<div class="t" id="t69" style="left:447.5px;top:150.95px;font-size:9px;color:#444;font-family:var(--s);">2</div>
<div class="t" id="t70" style="left:580.8px;top:150.95px;font-size:9px;color:#444;font-family:var(--s);">3</div>
<div class="t" id="t71" style="left:714.1px;top:150.95px;font-size:9px;color:#444;font-family:var(--s);">4</div>
<div class="t" id="t72" style="left:847.5px;top:150.95px;font-size:9px;color:#444;font-family:var(--s);">5</div>
<div class="t" id="t73" style="left:980.8px;top:150.95px;font-size:9px;color:#444;font-family:var(--s);">6</div>
<div class="t" id="t74" style="left:194px;top:397.03px;font-size:22.3px;color:#808080;font-family:var(--f);transform:scaleX(0.9939);">CONFIDENTIAL</div>
<div class="t" id="t75" style="left:670.2px;top:396.93px;font-size:22.3px;color:#6EAADC;font-family:var(--f);transform:scaleX(0.9928);">[Number or Name] protocol number</div>
<div class="t" id="t76" style="left:999.2px;top:396.93px;font-size:22.3px;color:#808080;font-family:var(--f);transform:scaleX(0.9773);">CSR</div>
<div class="t" id="t77" style="left:183.6px;top:464.60px;font-size:22px;color:#000;font-family:var(--f);font-weight:bold;transform:scaleX(1.0184);">List of Abbreviations and Definitions of Terms</div>
<div class="t" id="t78" style="left:185px;top:548.81px;font-size:18px;color:#00B050;font-family:var(--s);font-style:italic;transform:scaleX(1.0225);">&lt;Start of example text&gt;</div>
<div class="t" id="t79" style="left:194px;top:582.66px;font-size:18px;color:#0070C0;font-family:var(--f);font-style:italic;transform:scaleX(1.0394);">[abbreviation</div>
<div class="t" id="t80" style="left:194px;top:604.16px;font-size:18px;color:#0070C0;font-family:var(--f);font-style:italic;transform:scaleX(1.0047);">or term]</div>
<div class="t" id="t81" style="left:319px;top:582.66px;font-size:18px;color:#0070C0;font-family:var(--f);font-style:italic;transform:scaleX(1.0214);">[definition/explanation]</div>
<div class="t" id="t82" style="left:194px;top:625.86px;font-size:18px;color:#0070C0;font-family:var(--f);font-style:italic;transform:scaleX(1.0394);">[abbreviation</div>
<div class="t" id="t83" style="left:194px;top:647.26px;font-size:18px;color:#0070C0;font-family:var(--f);font-style:italic;transform:scaleX(1.0047);">or term]</div>
<div class="t" id="t84" style="left:319px;top:625.86px;font-size:18px;color:#0070C0;font-family:var(--f);font-style:italic;transform:scaleX(1.0214);">[definition/explanation]</div>
<div class="t" id="t85" style="left:194px;top:669.36px;font-size:18px;color:#0070C0;font-family:var(--f);font-style:italic;transform:scaleX(1.0394);">[abbreviation</div>
<div class="t" id="t86" style="left:194px;top:690.96px;font-size:18px;color:#0070C0;font-family:var(--f);font-style:italic;transform:scaleX(1.0047);">or term]</div>
<div class="t" id="t87" style="left:319px;top:669.36px;font-size:18px;color:#0070C0;font-family:var(--f);font-style:italic;transform:scaleX(1.0214);">[definition/explanation]</div>
<div class="t" id="t88" style="left:185px;top:727.61px;font-size:18px;color:#00B050;font-family:var(--s);font-style:italic;transform:scaleX(1.0226);">&lt;End of example text&gt;</div>
<div class="t" id="t89" style="left:1083.9px;top:154.85px;font-size:19.5px;color:#323130;font-family:var(--s);transform:scaleX(0.9668);">MPilotAI</div>
<div class="t" id="t90" style="left:1141.4px;top:213.09px;font-size:13.6px;color:#323130;font-family:var(--s);-webkit-text-stroke:0.4px #323130;transform:scaleX(0.9513);">Home</div>
<div class="t" id="t91" style="left:1122.6px;top:290.54px;font-size:13px;color:#323130;font-family:var(--s);transform:scaleX(1.0117);">"Start" button.</div>
<div class="t" id="t92" style="left:1319.8px;top:330.14px;font-size:12px;color:#FFFFFF;font-family:var(--s);transform:scaleX(0.9219);">Manage Documents</div>
<div class="t" id="t93" style="left:1454px;top:330.14px;font-size:12px;color:#FFFFFF;font-family:var(--s);transform:scaleX(0.8917);">Start</div>
<div class="t" id="t94" style="left:1118.9px;top:384.62px;font-size:15px;color:#323130;font-family:var(--s);-webkit-text-stroke:0.5px #323130;transform:scaleX(1.0531);">MPilot</div>
<div class="t" id="t95" style="left:1122px;top:420.63px;font-size:13px;color:#3B3A39;font-family:var(--s);transform:scaleX(1.0081);">Please fill in the information below for List of Abbreviations</div>
<div class="t" id="t96" style="left:1122px;top:439.54px;font-size:13px;color:#3B3A39;font-family:var(--s);transform:scaleX(0.9912);">Definitions of Terms:</div>
<div class="t" id="t97" style="left:1125.7px;top:477.44px;font-size:12px;color:#323130;font-family:var(--s);font-weight:bold;transform:scaleX(0.9040);">List of Abbreviations and</div>
<div class="t" id="t98" style="left:1125.7px;top:496.04px;font-size:12px;color:#323130;font-family:var(--s);font-weight:bold;transform:scaleX(0.9129);">Definitions of Terms</div>
<div class="t" id="t99" style="left:1119.3px;top:810.24px;font-size:13px;color:#6E6E6E;font-family:var(--s);transform:scaleX(0.9362);">Type a message</div>
<div class="t" id="t100" style="left:11.6px;top:922.04px;font-size:11px;color:#444;font-family:var(--s);transform:scaleX(0.8559);">Page 9 of 35</div>
<div class="t" id="t101" style="left:87px;top:922.04px;font-size:11px;color:#444;font-family:var(--s);transform:scaleX(0.8967);">4879 words</div>
<div class="t" id="t102" style="left:184px;top:922.04px;font-size:11px;color:#444;font-family:var(--s);transform:scaleX(0.8498);">English (United States)</div>
<div class="t" id="t103" style="left:342px;top:922.04px;font-size:11px;color:#222;font-family:var(--s);font-weight:bold;transform:scaleX(0.8809);">Accessibility: Investigate</div>
<div class="t" id="t104" style="left:1505.8px;top:922.04px;font-size:11px;color:#444;font-family:var(--s);transform:scaleX(0.8600);">150%</div>

<!-- ============ CALLOUTS ============ -->
<svg style="left:0;top:0" width="1549" height="939">
  <g fill="#fff">
    <rect x="840.5" y="72" width="10" height="22"/>
    <rect x="907" y="72" width="10.5" height="22"/>
    <rect x="974" y="72" width="9.5" height="22"/>
    <rect x="1041.5" y="72" width="8.8" height="22"/>
    <rect x="1107.3" y="72" width="10.2" height="22"/>
  </g>
  <g fill="#9DC3E6">
    <rect x="618" y="421" width="57" height="48" rx="7"/>
    <path d="M627.7 468 L641.8 468 L634.5 482Z"/>
    <rect x="1453" y="414" width="57" height="48" rx="7"/>
    <path d="M1462.4 461 L1476.7 461 L1469.6 475Z"/>
    <rect x="1429" y="645" width="57" height="48" rx="7"/>
    <path d="M1438.7 692 L1452.5 692 L1445.3 706Z"/>
  </g>
</svg>
<div class="t" id="t105" style="left:638.5px;top:432.38px;font-size:25px;color:#4472C4;font-family:var(--s);">1</div>
<div class="t" id="t106" style="left:1474.5px;top:424.68px;font-size:25px;color:#4472C4;font-family:var(--s);">2</div>
<div class="t" id="t107" style="left:1450.5px;top:656.08px;font-size:25px;color:#4472C4;font-family:var(--s);">3</div>
</body></html>
